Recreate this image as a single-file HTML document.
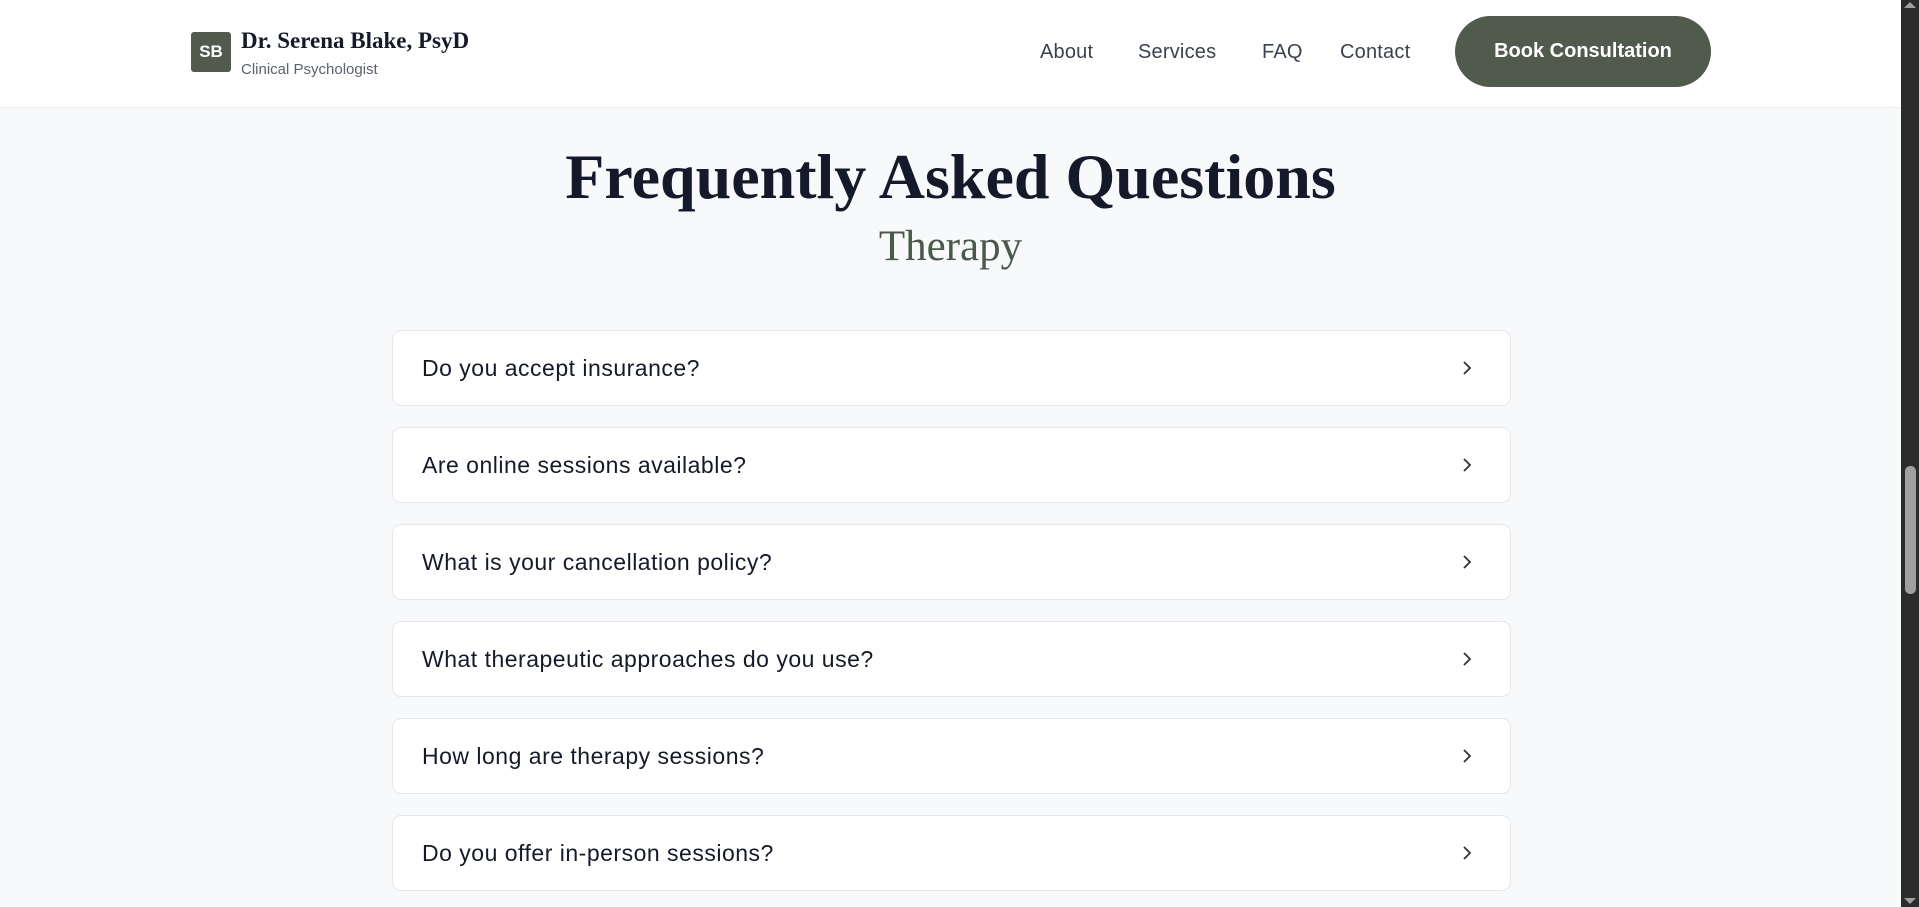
<!DOCTYPE html>
<html><head><meta charset="utf-8"><style>
*{box-sizing:border-box;margin:0;padding:0}
html,body{width:1919px;height:907px;overflow:hidden}
body{background:#f8f9fb;font-family:"Liberation Sans",sans-serif;position:relative}
.hdr{position:absolute;left:0;top:0;width:1901px;height:108px;background:#fff;border-bottom:1px solid #eceef0}
.logo{position:absolute;left:191px;top:32px;width:40px;height:40px;background:#505b4e;border-radius:3px;color:#fff;font-weight:bold;font-size:17px;text-align:center;line-height:40px}
.name{position:absolute;left:241px;top:28px;font-family:"Liberation Serif",serif;font-weight:bold;font-size:23px;color:#141a2a}
.sub{position:absolute;left:241px;top:61px;font-size:15px;color:#5a6170}
.nav{position:absolute;top:41px;font-size:20px;color:#3a4252;letter-spacing:0.2px}
.btn{position:absolute;left:1455px;top:16px;width:256px;height:71px;border-radius:36px;background:#505b4e;color:#fff;font-size:20px;font-weight:bold;text-align:center;line-height:71px}
h1{position:absolute;left:0;width:1901px;top:140px;text-align:center;font-family:"Liberation Serif",serif;font-weight:bold;font-size:64px;color:#141a2a}
h2{position:absolute;left:0;width:1901px;top:222px;text-align:center;font-family:"Liberation Serif",serif;font-weight:normal;font-size:43px;color:#4a5a4a}
.card{position:absolute;left:392px;width:1119px;height:76px;background:#fff;border:1px solid #e5e7eb;border-radius:9px}
.card span{position:absolute;left:29px;top:24px;font-size:23px;letter-spacing:0.5px;color:#141a2a}
.card svg{position:absolute;left:1066px;top:29px}
.sb{position:absolute;left:1901px;top:0;width:18px;height:907px;background:#2b2b2b}
.th{position:absolute;left:4px;top:466px;width:11px;height:128px;background:#a0a0a0;border-radius:5px}
</style></head><body>
<div class="hdr">
<div class="logo">SB</div>
<div class="name">Dr. Serena Blake, PsyD</div>
<div class="sub">Clinical Psychologist</div>
<div class="nav" style="left:1040px">About</div>
<div class="nav" style="left:1138px">Services</div>
<div class="nav" style="left:1262px">FAQ</div>
<div class="nav" style="left:1340px">Contact</div>
<div class="btn">Book Consultation</div>
</div>
<h1>Frequently Asked Questions</h1>
<h2>Therapy</h2>
<div class="card" style="top:330px"><span>Do you accept insurance?</span><svg width="16" height="16" viewBox="0 0 16 16"><path d="M5 2l6 6-6 6" fill="none" stroke="#333" stroke-width="1.8"/></svg></div>
<div class="card" style="top:427px"><span>Are online sessions available?</span><svg width="16" height="16" viewBox="0 0 16 16"><path d="M5 2l6 6-6 6" fill="none" stroke="#333" stroke-width="1.8"/></svg></div>
<div class="card" style="top:524px"><span>What is your cancellation policy?</span><svg width="16" height="16" viewBox="0 0 16 16"><path d="M5 2l6 6-6 6" fill="none" stroke="#333" stroke-width="1.8"/></svg></div>
<div class="card" style="top:621px"><span>What therapeutic approaches do you use?</span><svg width="16" height="16" viewBox="0 0 16 16"><path d="M5 2l6 6-6 6" fill="none" stroke="#333" stroke-width="1.8"/></svg></div>
<div class="card" style="top:718px"><span>How long are therapy sessions?</span><svg width="16" height="16" viewBox="0 0 16 16"><path d="M5 2l6 6-6 6" fill="none" stroke="#333" stroke-width="1.8"/></svg></div>
<div class="card" style="top:815px"><span>Do you offer in-person sessions?</span><svg width="16" height="16" viewBox="0 0 16 16"><path d="M5 2l6 6-6 6" fill="none" stroke="#333" stroke-width="1.8"/></svg></div>
<div class="sb"><div class="th"></div>
<svg style="position:absolute;left:3px;top:2px" width="12" height="6"><path d="M0 6L6 0L12 6Z" fill="#a0a0a0"/></svg>
<svg style="position:absolute;left:3px;top:898px" width="12" height="6"><path d="M0 0L6 6L12 0Z" fill="#a0a0a0"/></svg>
</div>
</body></html>
